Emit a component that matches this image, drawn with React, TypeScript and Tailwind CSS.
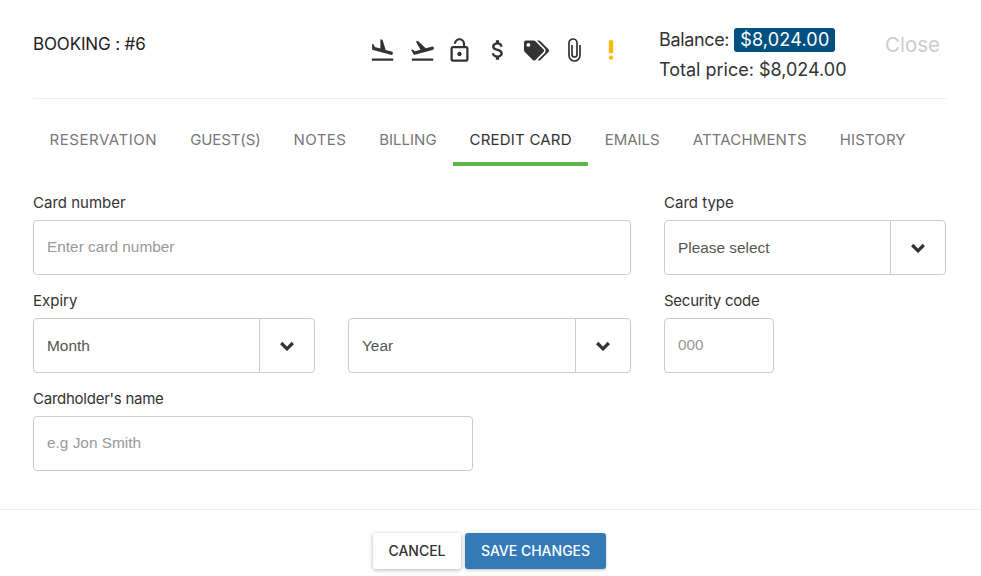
import { FaTags } from "react-icons/fa";
import { MdAttachMoney, MdFlightLand, MdFlightTakeoff, MdLockOpen, MdPriorityHigh } from "react-icons/md";

const tabs = [
  { name: "RESERVATION", spacing: "tracking-[0.55px]" },
  { name: "GUEST(S)", spacing: "tracking-[-0.1px]" },
  { name: "NOTES", spacing: "tracking-[0.4px]" },
  { name: "BILLING", spacing: "tracking-[0px]" },
  { name: "CREDIT CARD", spacing: "tracking-[0.2px]" },
  { name: "EMAILS", spacing: "tracking-[0px]" },
  { name: "ATTACHMENTS", spacing: "tracking-[0.15px]" },
  { name: "HISTORY", spacing: "tracking-[0.15px]" },
];

const Field = ({ label, className, labelClass, children }: { label?: string; className?: string; labelClass?: string; children: React.ReactNode }) => (
  <div className={className}>
    <label className={`block h-[27px] text-[15px] leading-[20px] text-[#333] ${labelClass ?? ""}`}>{label}</label>
    {children}
  </div>
);

const TextInput = ({ placeholder, className }: { placeholder: string; className: string }) => (
  <input
    placeholder={placeholder}
    className={`h-[55px] rounded border border-[#ccc] px-[13px] pb-[2px] font-['Liberation_Sans',sans-serif] text-[15.4px] outline-none placeholder:text-[#999] ${className}`}
  />
);

const Chevron = () => (
  <svg width="14" height="10" viewBox="0 0 14 10" fill="none" stroke="#333" strokeWidth="3.2">
    <path d="M1.2 2 7 7.8 12.8 2" />
  </svg>
);

const SelectBox = ({ value }: { value: string }) => (
  <div className="flex h-[55px] items-center rounded border border-[#ccc] font-['Liberation_Sans',sans-serif] text-[15.4px] text-[#555]">
    <span className="flex-1 pl-[13px] pt-[1px]">{value}</span>
    <span className="flex h-full w-[55px] items-center justify-center border-l border-[#ccc] pt-[1px]">
      <Chevron />
    </span>
  </div>
);

const Paperclip = () => (
  <svg width="13" height="24" viewBox="0 0 13 24" fill="none" stroke="#333" strokeWidth="1.7" className="ml-[19px]">
    <path d="M12 7V17.5a5.5 5.5 0 0 1-11 0V5a4 4 0 0 1 8 0V16.5a2.5 2.5 0 0 1-5 0V7" />
  </svg>
);

export default function App() {
  return (
    <div className="h-[576px] w-[981px] overflow-hidden bg-white font-['Inter',sans-serif] text-[#333]">
      <div className="ml-[33px] mr-[35px] flex h-[99px] border-b border-[#eee]">
        <div className="w-[328px] pt-[34px] text-[17px] leading-[20px] tracking-[-0.15px] text-[#222]">BOOKING : #6</div>
        <div className="flex h-[30px] translate-y-[35px] items-center text-[#333]">
          <MdFlightLand size={27} className="ml-[8px]" />
          <MdFlightTakeoff size={27} className="ml-[13px]" />
          <MdLockOpen size={27} className="ml-[10px]" />
          <MdAttachMoney size={26} className="ml-[12px]" />
          <FaTags size={25} className="ml-[13px]" />
          <Paperclip />
          <MdPriorityHigh size={26} className="ml-[17px] text-[#f9bc06]" />
        </div>
        <div className="ml-[35px] pt-[25px] text-[18px] leading-[30px] text-[#333]">
          <div className="flex items-center">
            <span className="tracking-[-0.35px]">Balance:</span>
            <span className="ml-[5px] h-[24px] rounded-[3px] bg-[#00517f] px-[6px] text-[18px] leading-[23px] tracking-[0.2px] text-white">$8,024.00</span>
          </div>
          <div>Total price: $8,024.00</div>
        </div>
        <div className="ml-auto mr-[6px] pt-[30px] text-[20.5px] leading-[30px] text-[#ccc]">Close</div>
      </div>

      <div className="ml-[33px] flex h-[67px] items-end">
        {tabs.map((tab) => (
          <div
            key={tab.name}
            className={`flex h-[40px] items-start px-[16.5px] pt-[4px] text-[15px] leading-[20px] ${tab.spacing} ${
              tab.name === "CREDIT CARD" ? "border-b-4 border-[#5eb648] text-[#333]" : "text-[#777]"
            }`}
          >
            {tab.name}
          </div>
        ))}
      </div>

      <div className="mx-[33px] mt-[27px] grid grid-cols-[282px_283px_282px] gap-x-[33px] gap-y-[16px]">
        <Field label="Card number" className="col-span-2">
          <TextInput placeholder="Enter card number" className="w-full" />
        </Field>
        <Field label="Card type">
          <SelectBox value="Please select" />
        </Field>
        <Field label="Expiry">
          <SelectBox value="Month" />
        </Field>
        <Field>
          <SelectBox value="Year" />
        </Field>
        <Field label="Security code" labelClass="tracking-[-0.25px]">
          <TextInput placeholder="000" className="w-[110px]" />
        </Field>
        <Field label="Cardholder's name" className="col-span-2" labelClass="tracking-[-0.25px]">
          <TextInput placeholder="e.g Jon Smith" className="w-[440px]" />
        </Field>
      </div>

      <div className="mt-[38px] flex justify-center gap-[4px] border-t border-[#eee] pt-[23px] pr-[3px]">
        <button className="h-[36px] w-[88px] rounded-[3px] bg-white pb-[2px] pl-[1px] text-[14px] font-medium text-[#333] shadow-[0_1px_4px_rgba(0,0,0,0.3)]">CANCEL</button>
        <button className="h-[36px] w-[141px] rounded-[3px] bg-[#337ab7] pb-[2px] pl-[1px] text-[14px] font-medium text-white shadow-[0_1px_3px_rgba(0,0,0,0.25)]">SAVE CHANGES</button>
      </div>
    </div>
  );
}
